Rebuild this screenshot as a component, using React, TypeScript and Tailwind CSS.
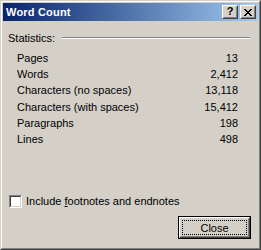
import React from 'react';

const STATS = [
  { label: 'Pages', value: '13' },
  { label: 'Words', value: '2,412' },
  { label: 'Characters (no spaces)', value: '13,118' },
  { label: 'Characters (with spaces)', value: '15,412' },
  { label: 'Paragraphs', value: '198' },
  { label: 'Lines', value: '498' },
];

function CaptionButton({ children }: { children: React.ReactNode }) {
  return (
    <div className="w-[16px] h-[14px] bg-[#d4d0c8] border border-t-white border-l-white border-r-[#404040] border-b-[#404040]">
      <div className="w-full h-full border border-t-[#d4d0c8] border-l-[#d4d0c8] border-r-[#808080] border-b-[#808080] flex items-center justify-center">
        {children}
      </div>
    </div>
  );
}

export default function App() {
  return (
    <div className="w-[261px] h-[250px] bg-[#d4d0c8] text-black text-[11px] leading-[16px] font-['Liberation_Sans',Arial,sans-serif]">
      {/* window frame */}
      <div className="w-full h-full border border-t-[#d4d0c8] border-l-[#d4d0c8] border-r-[#404040] border-b-[#404040]">
        <div className="w-full h-full border border-t-white border-l-white border-r-[#808080] border-b-[#808080] p-px flex flex-col">
          {/* title bar */}
          <div className="h-[18px] flex items-center justify-between pl-[3px] pr-[2px] bg-gradient-to-r from-[#0a246a] to-[#a6caf0]">
            <span className="text-white font-bold text-[11px] leading-none tracking-[0.2px]">Word Count</span>
            <div className="flex gap-[2px]">
              <CaptionButton>
                <span className="font-bold text-[11px] leading-none -mt-px">?</span>
              </CaptionButton>
              <CaptionButton>
                <svg width="8" height="7" viewBox="0 0 8 7" shapeRendering="crispEdges">
                  <path d="M0 0h2v1H0zM6 0h2v1H6zM1 1h2v1H1zM5 1h2v1H5zM2 2h4v1H2zM3 3h2v1H3zM2 4h4v1H2zM1 5h2v1H1zM5 5h2v1H5zM0 6h2v1H0zM6 6h2v1H6z" fill="black" />
                </svg>
              </CaptionButton>
            </div>
          </div>

          {/* body */}
          <div className="flex-1 flex flex-col pt-[9px]">
            <div className="flex items-center pl-[5px] pr-[8px] h-[16px]">
              <span>Statistics:</span>
              <div className="flex-1 ml-[7px] border-t border-t-[#808080] border-b border-b-white" />
            </div>

            <div className="mt-[4px] pl-[14px] pr-[20px]">
              {STATS.map(s => (
                <div key={s.label} className="h-[16.2px] flex items-center justify-between">
                  <span>{s.label}</span>
                  <span>{s.value}</span>
                </div>
              ))}
            </div>

            <div className="mt-[46px] h-[16px] flex items-center pl-[6px]">
              <div className="w-[13px] h-[13px] border border-t-[#808080] border-l-[#808080] border-r-white border-b-white">
                <div className="w-full h-full bg-white border border-t-[#404040] border-l-[#404040] border-r-[#d4d0c8] border-b-[#d4d0c8]" />
              </div>
              <span className="ml-[4px]">
                Include <span className="underline underline-offset-[1px]">f</span>ootnotes and endnotes
              </span>
            </div>

            <div className="mt-[7px] flex justify-end pr-[7px]">
              <div className="w-[73px] h-[23px] border border-black">
                <div className="w-full h-full border border-t-white border-l-white border-r-[#404040] border-b-[#404040]">
                  <div className="w-full h-full border border-t-[#d4d0c8] border-l-[#d4d0c8] border-r-[#808080] border-b-[#808080] p-px">
                    <div className="w-full h-full border border-dotted border-black flex items-center justify-center">
                      Close
                    </div>
                  </div>
                </div>
              </div>
            </div>
          </div>
        </div>
      </div>
    </div>
  );
}
